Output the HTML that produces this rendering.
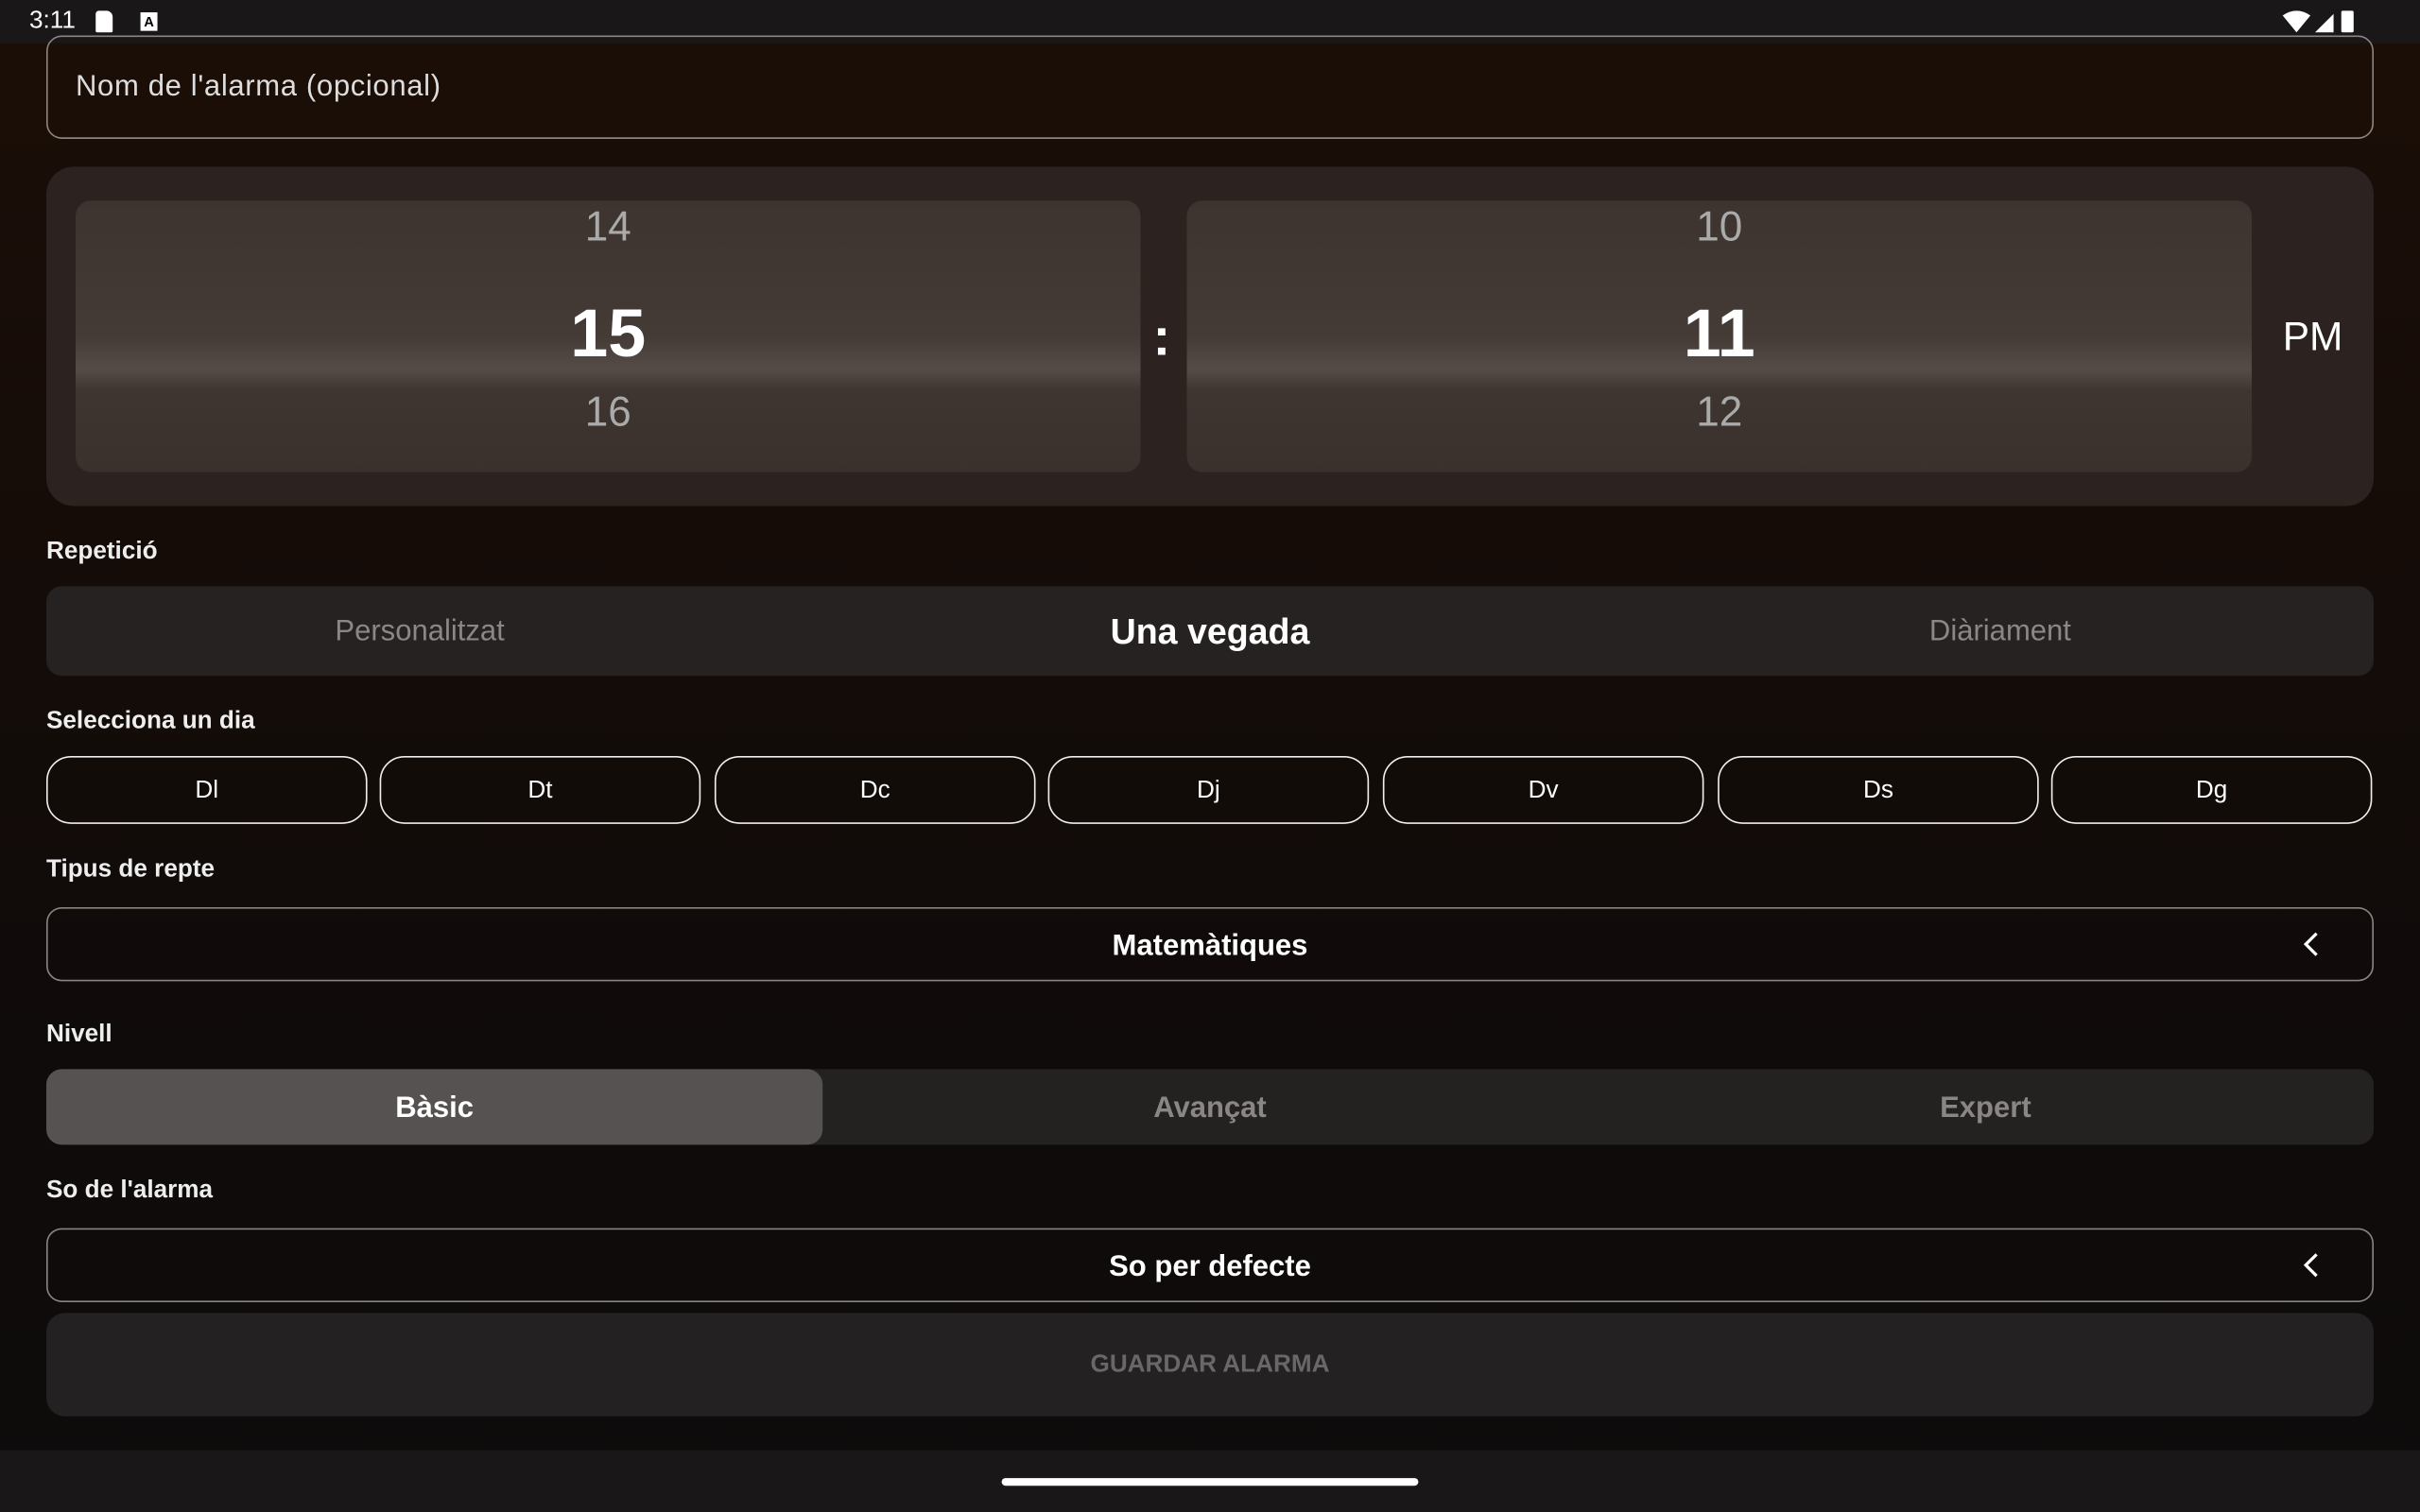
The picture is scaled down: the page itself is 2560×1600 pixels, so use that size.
<!DOCTYPE html>
<html><head><meta charset="utf-8"><style>
*{margin:0;padding:0;box-sizing:border-box}
html,body{width:2560px;height:1600px;overflow:hidden;background:#0e0b0a}
#w{position:absolute;left:0;top:0;width:1568px;height:980px;transform:scale(1.632653);transform-origin:0 0;font-family:"Liberation Sans",sans-serif;color:#fff;background:linear-gradient(#1b0e07 0%,#150c08 35%,#0f0b0a 70%,#0d0b0b 100%)}
.a{position:absolute}
.lbl{position:absolute;left:30px;font-size:16px;font-weight:bold;color:#eee}
.pill{position:absolute;top:490px;height:44px;width:208px;border:1.5px solid #eee;border-radius:16px;font-size:16px;display:flex;align-items:center;justify-content:center;padding-top:2px}
.col{position:absolute;top:130px;width:690px;height:176px;border-radius:10px;background:linear-gradient(#3d3430 0%,#443a36 50%,#554b47 62%,#3e3531 70%,#3a312d 100%)}
.n{position:absolute;width:100%;text-align:center}
.sel{position:absolute;left:30px;width:1508px;height:48px;border:1px solid #8a8380;border-radius:10px;display:flex;align-items:center;justify-content:center;font-size:19px;font-weight:bold;padding-top:3px}
.chev{position:absolute;right:30px;top:14px;width:18px;height:18px}
</style></head><body><div id="w">
<div class="a" style="left:0;top:0;width:1568px;height:28px;background:#1a1718"></div>
<div class="a" style="left:19px;top:5px;font-size:16px">3:11</div>
<div class="a" style="left:62px;top:7px;width:11px;height:14px;background:#fff;border-radius:2px 4px 1px 1px"></div>
<div class="a" style="left:91px;top:8px;width:11px;height:12px;background:#fff;color:#000;font-size:9px;font-weight:bold;text-align:center;line-height:12px">A</div>
<svg class="a" style="left:1478px;top:6px" width="56" height="16"><path d="M1 4 Q10 -2 19 4 L10 15Z" fill="#fff"/><path d="M22 15 L34 3 L34 15Z" fill="#fff"/><rect x="39" y="1" width="8" height="14" rx="1" fill="#fff"/></svg>
<div class="a" style="left:30px;top:23px;width:1508px;height:67px;border:1px solid #8b8480;border-radius:10px"></div>
<div class="a" style="left:49px;top:46px;font-size:19px;color:#ddd;letter-spacing:0.4px">Nom de l'alarma (opcional)</div>
<div class="a" style="left:30px;top:108px;width:1508px;height:220px;border-radius:18px;background:#2c2320"></div>
<div class="col" style="left:49px"><div class="n" style="top:2px;font-size:27px;color:#aaa">14</div><div class="n" style="top:62px;font-size:44px;font-weight:bold">15</div><div class="n" style="top:122px;font-size:27px;color:#aaa">16</div></div>
<div class="a" style="left:747px;top:200px;font-size:34px;font-weight:bold">:</div>
<div class="col" style="left:769px"><div class="n" style="top:2px;font-size:27px;color:#aaa">10</div><div class="n" style="top:62px;font-size:44px;font-weight:bold">11</div><div class="n" style="top:122px;font-size:27px;color:#aaa">12</div></div>
<div class="a" style="left:1479px;top:203px;font-size:26px">PM</div>
<div class="lbl" style="top:349px">Repetició</div>
<div class="a" style="left:30px;top:380px;width:1508px;height:58px;border-radius:10px;background:#262221"></div>
<div class="a" style="left:30px;top:399px;width:484px;text-align:center;font-size:19px;color:#8c8685">Personalitzat</div>
<div class="a" style="left:30px;top:396px;width:1508px;text-align:center;font-size:23px;font-weight:bold">Una vegada</div>
<div class="a" style="left:1054px;top:399px;width:484px;text-align:center;font-size:19px;color:#8c8685">Diàriament</div>
<div class="lbl" style="top:459px">Selecciona un dia</div>
<div class="pill" style="left:30px">Dl</div><div class="pill" style="left:246px">Dt</div><div class="pill" style="left:463px">Dc</div><div class="pill" style="left:679px">Dj</div><div class="pill" style="left:896px">Dv</div><div class="pill" style="left:1113px">Ds</div><div class="pill" style="left:1329px">Dg</div>
<div class="lbl" style="top:555px">Tipus de repte</div>
<div class="sel" style="top:588px">Matemàtiques<svg class="chev" viewBox="0 0 18 18"><path d="M12 2 L5 9 L12 16" fill="none" stroke="#fff" stroke-width="2"/></svg></div>
<div class="lbl" style="top:662px">Nivell</div>
<div class="a" style="left:30px;top:693px;width:1508px;height:49px;border-radius:10px;background:#242221"></div>
<div class="a" style="left:30px;top:693px;width:503px;height:49px;border-radius:10px;background:#555251"></div>
<div class="a" style="left:30px;top:708px;width:503px;text-align:center;font-size:19px;font-weight:bold">Bàsic</div>
<div class="a" style="left:533px;top:708px;width:502px;text-align:center;font-size:19px;font-weight:bold;color:#8a8685">Avançat</div>
<div class="a" style="left:1035px;top:708px;width:503px;text-align:center;font-size:19px;font-weight:bold;color:#8a8685">Expert</div>
<div class="lbl" style="top:763px">So de l'alarma</div>
<div class="sel" style="top:796px">So per defecte<svg class="chev" viewBox="0 0 18 18"><path d="M12 2 L5 9 L12 16" fill="none" stroke="#fff" stroke-width="2"/></svg></div>
<div class="a" style="left:30px;top:851px;width:1508px;height:67px;border-radius:12px;background:#232121;text-align:center;line-height:67px;font-size:16px;font-weight:bold;color:#6a6766">GUARDAR ALARMA</div>
<div class="a" style="left:0;top:940px;width:1568px;height:40px;background:#1a1718"></div>
<div class="a" style="left:649px;top:958px;width:270px;height:5px;border-radius:3px;background:#fff"></div>
</div></body></html>
